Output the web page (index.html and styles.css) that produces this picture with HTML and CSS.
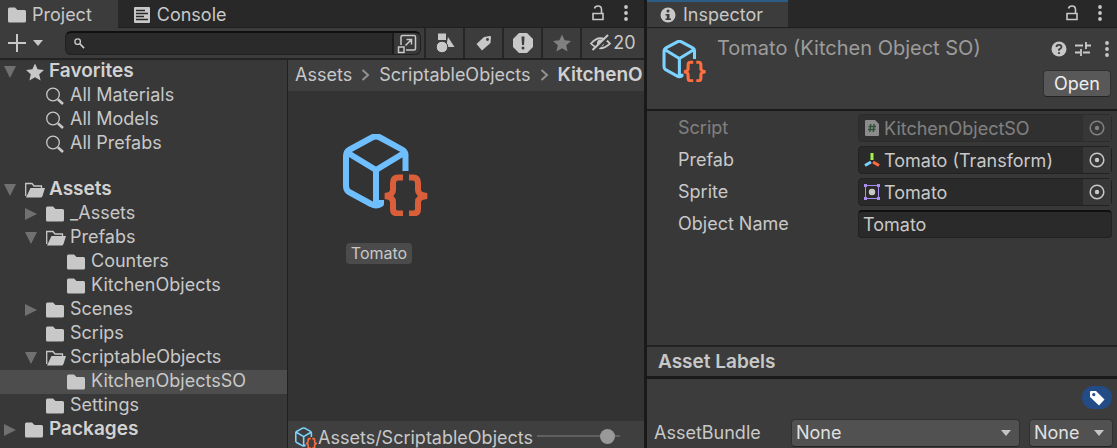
FILE: index.html
```html
<!DOCTYPE html>
<html lang="en">
<head>
<meta charset="utf-8">
<title>Project and Inspector</title>
<link rel="stylesheet" href="styles.css">
</head>
<body>
<svg class="sprites" aria-hidden="true">
  <symbol id="folder" viewBox="0 0 20 18"><path d="M0 3Q0 1.500 1.500 1.500H7L9.500 4H16.500Q18 4 18 5.500V15Q18 16.500 16.500 16.500H1.500Q0 16.500 0 15Z" fill="currentColor"/></symbol>
  <symbol id="folder-open" viewBox="0 0 20 18"><path d="M0.700 15V2.500H7L9 5H16.500V7.500" fill="none" stroke="currentColor" stroke-width="1.300"/><path d="M5.500 7H20L17.500 15Q17 16.500 15.500 16.500H1Z" fill="currentColor"/></symbol>
  <symbol id="down" viewBox="0 0 12 12"><path d="M0 0H12L6 12Z" fill="currentColor"/></symbol>
  <symbol id="right" viewBox="0 0 12 12"><path d="M0 0L12 6L0 12Z" fill="currentColor"/></symbol>
  <symbol id="caret" viewBox="0 0 10 6"><path d="M0 0H10L5 6Z" fill="currentColor"/></symbol>
  <symbol id="star" viewBox="0 0 18 18"><path d="M9 0.500L11.600 6.300L18 7L13.200 11.200L14.600 17.500L9 14.200L3.400 17.500L4.800 11.200L0 7L6.400 6.300Z" fill="currentColor"/></symbol>
  <symbol id="lens" viewBox="0 0 20 18"><circle cx="7" cy="7.500" r="6.300" fill="none" stroke="currentColor" stroke-width="1.300"/><path d="M12 12.500L17 17" stroke="currentColor" stroke-width="2.600"/></symbol>
  <symbol id="lock" viewBox="0 0 12 16"><path d="M1 8.500H11V14.500H1ZM2.500 3.500Q3 1 6 1Q9.500 1 9.500 4.500V8" fill="none" stroke="currentColor" stroke-width="1.600"/></symbol>
  <symbol id="dots" viewBox="0 0 4 16"><g fill="currentColor"><circle cx="2" cy="2" r="1.900"/><circle cx="2" cy="8" r="1.900"/><circle cx="2" cy="14" r="1.900"/></g></symbol>
  <symbol id="chevron" viewBox="0 0 8 12"><path d="M1 1L6.500 6L1 11" fill="none" stroke="currentColor" stroke-width="2"/></symbol>
  <symbol id="target" viewBox="0 0 16 16"><circle cx="8" cy="8" r="6.800" fill="none" stroke="currentColor" stroke-width="1.500"/><circle cx="8" cy="8" r="2.200" fill="currentColor"/></symbol>
  <symbol id="asset" viewBox="0 0 84 82"><path d="M62.500 37V21Q62.500 17.500 59 15.500L37 3.500Q33 1.500 29 3.500L6 16Q3 18 3 22V52Q3 56 6 58L28 70Q33 73 38 70V66M5 19L33 36L61 19M33 36V70" fill="none" stroke="var(--cube)" stroke-width="var(--line)" stroke-linejoin="round"/><path d="M60 43.500H55Q50 43.500 50 49V56Q50 61 42 62Q50 63 50 68V75Q50 79.500 55 79.500H60M66 43.500H70Q75 43.500 75 49V56Q75 61 84 62Q75 63 75 68V75Q75 79.500 70 79.500H66" fill="none" stroke="var(--brace)" stroke-width="6"/></symbol>
</svg>
<main class="editor">
  <section class="project">
    <header class="tabs">
      <button class="tab tab-active"><svg class="i20"><use href="#folder"/></svg>Project</button>
      <button class="tab"><svg class="i16" viewBox="0 0 16 18"><rect y="1" width="16" height="16" rx="1" fill="currentColor"/><path d="M2 4.500H11M2 7.500H14M2 10.500H10M2 13.500H14" stroke="#282828" stroke-width="1.300"/></svg>Console</button>
      <div class="tab-tools"><button aria-label="Lock"><svg class="lock"><use href="#lock"/></svg></button><button aria-label="Menu"><svg class="dots"><use href="#dots"/></svg></button></div>
    </header>
    <div class="toolbar">
      <button class="add" aria-label="Create"><svg class="plus" viewBox="0 0 18 18"><path d="M0 9H18M9 0V18" stroke="currentColor" stroke-width="2"/></svg><svg class="caret"><use href="#caret"/></svg></button>
      <div class="search">
        <svg class="search-lens" viewBox="0 0 12 12"><circle cx="4" cy="4" r="3" fill="none" stroke="currentColor" stroke-width="1.500"/><path d="M6.500 6.500L11 11" stroke="currentColor" stroke-width="1.800"/></svg>
        <input type="text" aria-label="Search">
        <button class="popout" aria-label="Open search"><svg class="i20" viewBox="0 0 20 20"><path d="M4 11V3Q4 1.500 5.500 1.500H17Q18.500 1.500 18.500 3V14.500Q18.500 16 17 16H9M1.500 13H7V18.500H1.500ZM8.500 11.500L14 6M9.500 5.500H14.500V10.500" fill="none" stroke="currentColor" stroke-width="1.500"/></svg></button>
      </div>
      <button class="tool" aria-label="Filter by type"><svg class="i20" viewBox="0 0 20 20"><path d="M3 0.500H11V7H3ZM13 4L19.500 14H11Z" fill="currentColor"/><circle cx="7" cy="14" r="5.800" fill="currentColor" stroke="#3c3c3c"/></svg></button>
      <button class="tool" aria-label="Filter by label"><svg class="i16" viewBox="0 0 16 16"><path d="M8 2L14 1Q15 1 15 2L14.500 8L6 15.500L0.500 9Z" fill="currentColor"/><circle cx="11.500" cy="4.500" r="1.400" fill="#3c3c3c"/></svg></button>
      <button class="tool" aria-label="Filter by message"><svg class="i20" viewBox="0 0 20 20"><path d="M6 0H14L20 6V14L14 20H6L0 14V6Z" fill="currentColor"/><path d="M8.500 3.500H11.500L11 12H9Z" fill="#3c3c3c"/><circle cx="10" cy="15" r="1.500" fill="#3c3c3c"/></svg></button>
      <button class="tool dim" aria-label="Save search"><svg class="i18"><use href="#star"/></svg></button>
      <button class="tool hidden-count"><svg class="eye" viewBox="0 0 22 18"><path d="M1 9.500Q10 -1 20 9.500Q10 19 1 9.500Z" fill="none" stroke="currentColor" stroke-width="1.800"/><circle cx="10.500" cy="9" r="3.500" fill="currentColor"/><path d="M4.500 17L19.500 2" stroke="#3c3c3c" stroke-width="3"/><path d="M2.500 16L18 1" stroke="currentColor" stroke-width="2"/></svg>20</button>
    </div>
    <div class="panes">
      <nav class="tree">
        <button class="row"><svg class="fold"><use href="#down"/></svg><svg class="i20"><use href="#star"/></svg><b>Favorites</b></button>
        <button class="row d1"><svg class="i20"><use href="#lens"/></svg>All Materials</button>
        <button class="row d1"><svg class="i20"><use href="#lens"/></svg>All Models</button>
        <button class="row d1"><svg class="i20"><use href="#lens"/></svg>All Prefabs</button>
        <button class="row group"><svg class="fold"><use href="#down"/></svg><svg class="i20"><use href="#folder-open"/></svg><b>Assets</b></button>
        <button class="row d1"><svg class="fold"><use href="#right"/></svg><svg class="i20"><use href="#folder"/></svg>_Assets</button>
        <button class="row d1"><svg class="fold"><use href="#down"/></svg><svg class="i20"><use href="#folder-open"/></svg>Prefabs</button>
        <button class="row d2"><svg class="i20"><use href="#folder"/></svg>Counters</button>
        <button class="row d2"><svg class="i20"><use href="#folder"/></svg>KitchenObjects</button>
        <button class="row d1"><svg class="fold"><use href="#right"/></svg><svg class="i20"><use href="#folder"/></svg>Scenes</button>
        <button class="row d1"><svg class="i20"><use href="#folder"/></svg>Scrips</button>
        <button class="row d1"><svg class="fold"><use href="#down"/></svg><svg class="i20"><use href="#folder-open"/></svg>ScriptableObjects</button>
        <button class="row d2 selected"><svg class="i20"><use href="#folder"/></svg>KitchenObjectsSO</button>
        <button class="row d1"><svg class="i20"><use href="#folder"/></svg>Settings</button>
        <button class="row"><svg class="fold"><use href="#right"/></svg><svg class="i20"><use href="#folder"/></svg><b>Packages</b></button>
      </nav>
      <div class="browser">
        <div class="crumbs"><button>Assets</button><svg class="chevron"><use href="#chevron"/></svg><button>ScriptableObjects</button><svg class="chevron"><use href="#chevron"/></svg><b>KitchenO</b></div>
        <div class="grid"><button class="item"><svg class="big"><use href="#asset"/></svg><span class="item-name">Tomato</span></button></div>
        <footer class="status"><svg class="small"><use href="#asset"/></svg><span class="path">Assets/ScriptableObjects</span><input class="zoom" type="range" min="0" max="100" value="92" aria-label="Icon size"></footer>
      </div>
    </div>
  </section>
  <section class="inspector">
    <header class="tabs">
      <button class="tab tab-active tab-focus"><svg class="i16" viewBox="0 0 16 16"><circle cx="8" cy="8" r="7.500" fill="currentColor"/><circle cx="8" cy="4" r="1.500" fill="#3c3c3c"/><path d="M5.500 7H9.500V11.500H11V13H5.500V11.500H6.800V8.500H5.500Z" fill="#3c3c3c"/></svg>Inspector</button>
      <div class="tab-tools"><button aria-label="Lock"><svg class="lock"><use href="#lock"/></svg></button><button aria-label="Menu"><svg class="dots"><use href="#dots"/></svg></button></div>
    </header>
    <div class="object-head">
      <svg class="medium"><use href="#asset"/></svg>
      <h1>Tomato (Kitchen Object SO)</h1>
      <div class="head-side">
        <div class="head-tools">
          <button aria-label="Help"><svg class="i16" viewBox="0 0 16 16"><circle cx="8" cy="8" r="7.500" fill="currentColor"/><path d="M5.500 6Q5.500 3.800 8 3.800Q10.500 3.800 10.500 6Q10.500 7.200 8 8.500V9.800" fill="none" stroke="#3c3c3c" stroke-width="1.800"/><circle cx="8" cy="12" r="1.100" fill="#3c3c3c"/></svg></button>
          <button aria-label="Presets"><svg class="i16" viewBox="0 0 16 16"><path d="M0 4.500H8M10 4.500H16M11 1V8M0 11.500H5M8 11.500H15M6 8V15" stroke="currentColor" stroke-width="1.800"/></svg></button>
          <button aria-label="More"><svg class="dots"><use href="#dots"/></svg></button>
        </div>
        <button class="open">Open</button>
      </div>
    </div>
    <div class="fields">
      <div class="field disabled"><span id="l1">Script</span><div class="ref"><button class="ref-value" aria-labelledby="l1" disabled><svg class="i16" viewBox="0 0 16 18"><path d="M1 2Q1 1 2 1H11L15 5V16Q15 17 14 17H2Q1 17 1 16Z" fill="#e0e0e0"/><path d="M6.800 5L5.800 13M10.200 5L9.200 13M4.500 7.500H12M4 10.500H11.500" stroke="#2a6a35" stroke-width="1.400"/></svg>KitchenObjectSO</button><button class="pick" aria-label="Pick script" disabled><svg class="i16"><use href="#target"/></svg></button></div></div>
      <div class="field"><span id="l2">Prefab</span><div class="ref"><button class="ref-value" aria-labelledby="l2"><svg class="i16" viewBox="0 0 16 16"><path d="M8 8V1" stroke="#a6f04c" stroke-width="3"/><path d="M7 10L1 13.500" stroke="#7ad0fb" stroke-width="3"/><path d="M9 10L15 13.500" stroke="#ff6d3f" stroke-width="3"/></svg>Tomato (Transform)</button><button class="pick" aria-label="Pick prefab"><svg class="i16"><use href="#target"/></svg></button></div></div>
      <div class="field"><span id="l3">Sprite</span><div class="ref"><button class="ref-value" aria-labelledby="l3"><svg class="i16" viewBox="0 0 16 16"><path d="M1.500 1.500H14.500V14.500H1.500Z" fill="none" stroke="#a98ef0"/><path d="M0 0H3V3H0ZM13 0H16V3H13ZM0 13H3V16H0ZM13 13H16V16H13Z" fill="#a98ef0"/><circle cx="8" cy="8" r="3.200" fill="#c8c8c8"/></svg>Tomato</button><button class="pick" aria-label="Pick sprite"><svg class="i16"><use href="#target"/></svg></button></div></div>
      <div class="field"><label for="name">Object Name</label><input class="text" id="name" type="text" value="Tomato"></div>
    </div>
    <h2 class="labels-bar">Asset Labels</h2>
    <div class="labels">
      <button class="pill" aria-label="Add label"><svg class="i16" viewBox="0 0 16 16"><path d="M1 2Q1 1 2 1H7L15.500 9.500L10 15.500L1 7Z" fill="#fff"/><circle cx="4.800" cy="4.600" r="1.600" fill="#234b85"/></svg></button>
      <div class="bundle">
        <label for="bundle">AssetBundle</label>
        <div class="drop drop-wide"><select id="bundle"><option>None</option></select><svg class="caret"><use href="#caret"/></svg></div>
        <div class="drop drop-narrow"><select aria-label="Variant"><option>None</option></select><svg class="caret"><use href="#caret"/></svg></div>
      </div>
    </div>
  </section>
</main>
</body>
</html>
```

FILE: styles.css
```css
* { box-sizing: border-box; }
body { margin: 0; background: #191919; color: #c8c8c8; font: 18px/24px Inter, "Liberation Sans", sans-serif; }
button, input, select { font: inherit; color: inherit; margin: 0; padding: 0; border: 0; background: none; border-radius: 0; outline: 0; min-width: 0; appearance: none; }
button { display: flex; align-items: center; white-space: nowrap; }
b { font-size: 19px; font-weight: 600; color: #d2d2d2; }
svg { display: block; flex: none; }
.sprites { width: 0; height: 0; position: absolute; }
.i20 { width: 20px; height: 18px; }
.i18 { width: 18px; height: 18px; }
.i16 { width: 16px; height: 18px; }
.lock { width: 12px; height: 16px; }
.dots { width: 4px; height: 16px; }
.caret { width: 10px; height: 6px; }
.editor { display: grid; grid-template-columns: 645fr 470fr; gap: 2px; height: 100vh; overflow: hidden; }
.project, .inspector { display: flex; flex-direction: column; min-width: 0; min-height: 0; background: #383838; }
.project { border-right: 1px solid #191919; }

.tabs { display: flex; height: 28px; background: #282828; border-bottom: 1px solid #1f1f1f; }
.tab { gap: 7px; padding: 2px 16px 0; }
.tab-active { background: #3c3c3c; margin-bottom: -1px; padding: 2px 26px 0 8px; gap: 4px; }
.tab-focus { border-top: 2px solid #2c5d87; padding: 0 25px 0 13px; gap: 7px; margin-bottom: 0; }
.tab-tools { display: flex; align-items: center; gap: 20px; margin-left: auto; padding: 0 16px 2px 0; }
.inspector .tab-tools { padding-right: 15px; }

.toolbar { display: flex; height: 32px; background: #3c3c3c; border-bottom: 2px solid #232323; }
.add { gap: 7px; padding: 0 22px 0 8px; }
.plus { width: 18px; height: 18px; }
.search { display: flex; align-items: center; flex: 1; min-width: 0; height: 24px; margin: 3px 3px 3px 0; padding-left: 8px; background: #2a2a2a; border: 1px solid #202020; border-top: 2px solid #101010; border-radius: 6px; }
.search-lens { width: 11px; height: 11px; }
.search input { flex: 1; padding: 0 4px; }
.popout { height: 21px; padding: 0 3px; background: #383838; border-left: 2px solid #1c1c1c; border-radius: 0 5px 5px 0; }
.popout .i20, .tool .i20 { height: 20px; }
.tool { justify-content: center; width: 39px; border-left: 2px solid #262626; }
.dim { color: #808080; }
.hidden-count { width: 64px; gap: 1px; }
.eye { width: 22px; height: 18px; }

.panes { display: flex; flex: 1; min-height: 0; }
.tree { flex: none; width: 288px; border-right: 1px solid #202020; }
.row { width: 100%; height: 24px; padding: 0 0 2px 4px; gap: 4px; }
.row .fold { width: 12px; height: 12px; color: #707070; margin: 2px 5px 0 0; }
.row .i20 { margin-top: 2px; }
.row > .i20:first-child { margin-left: 21px; }
.d1 { padding-left: 25px; }
.d2 { padding-left: 46px; }
.group { margin-top: 22px; }
.selected { background: #4d4d4d; }

.browser { display: flex; flex-direction: column; flex: 1; min-width: 0; background: #333; }
.crumbs { display: flex; align-items: center; height: 31px; flex: none; padding: 0 0 2px 7px; gap: 9px; background: #3f3f3f; overflow: hidden; white-space: nowrap; }
.chevron { width: 9px; height: 12px; color: #929292; }
.grid { flex: 1; padding: 43px 47px; }
.item { flex-direction: column; gap: 27px; }
.item-name { padding: 0 5px; border-radius: 4px; background: #4b4b4b; font-size: 16px; line-height: 21px; margin-right: 12px; }
.big, .medium, .small { --cube: #6fbfff; --brace: #d95f3b; --line: 6; }
.big { width: 100px; height: 82px; }
.medium { width: 44px; height: 42px; --cube: #7dd3ff; --brace: #ff6e40; }
.small { width: 22px; height: 22px; --cube: #7dd3ff; --brace: #ff6e40; }
.status { display: flex; align-items: center; height: 27px; padding: 6px 24px 0 7px; background: #3f3f3f; }
.path { flex: 1; min-width: 0; overflow: hidden; white-space: nowrap; padding-left: 1px; }
.zoom { width: 83px; height: 16px; margin: 0 0 4px 4px; }
.zoom::-webkit-slider-runnable-track { height: 2px; background: #606060; }
.zoom::-webkit-slider-thumb { appearance: none; width: 15px; height: 15px; margin-top: -6px; border-radius: 50%; background: #999; }

.object-head { display: flex; height: 82px; margin-top: 1px; padding: 11px 6px 0 15px; background: #3c3c3c; border-bottom: 2px solid #1a1a1a; }
.object-head h1 { flex: 1; min-width: 0; margin: -4px 0 0 11px; font-size: 20px; line-height: 24px; font-weight: 400; color: #9c9c9c; white-space: nowrap; }
.head-side { display: flex; flex-direction: column; align-items: flex-end; gap: 12px; }
.head-tools { display: flex; align-items: center; gap: 8px; padding-right: 2px; }
.head-tools button:last-child { margin-left: 6px; }
.open { height: 27px; padding: 0 10px; border: 1px solid #303030; border-bottom-color: #242424; border-radius: 4px; background: #585858; color: #eee; }

.fields { display: flex; flex-direction: column; gap: 4px; flex: 1; padding: 3px 5px 0 31px; }
.field { display: grid; grid-template-columns: 176px 1fr; gap: 4px; align-items: center; }
.ref, .text { display: flex; width: 100%; height: 28px; background: #2a2a2a; border: 1px solid #212121; border-radius: 4px; }
.text { padding-left: 4px; border-top: 2px solid #101010; }
.ref-value { flex: 1; padding: 2px 0 0 5px; gap: 4px; }
.ref-value .i16 { margin-bottom: 2px; }
.pick { justify-content: center; width: 28px; background: #373737; }
.disabled { opacity: 0.5; }

.labels-bar { margin: 0; padding: 3px 11px; height: 34px; border-top: 2px solid #222; border-bottom: 3px solid #1a1a1a; background: #3c3c3c; font-size: 19px; line-height: 24px; font-weight: 600; }
.labels { display: flex; flex-direction: column; align-items: flex-end; gap: 10px; padding: 7px 4px 1px 7px; background: #3c3c3c; }
.pill { justify-content: center; width: 30px; height: 23px; margin-right: 1px; border-radius: 12px; background: #234b85; }
.bundle { display: flex; width: 100%; align-items: center; gap: 9px; }
.bundle label { width: 128px; }
.drop { display: grid; align-items: center; height: 28px; border: 1px solid #303030; border-bottom-color: #242424; border-radius: 4px; background: #515151; color: #e0e0e0; }
.drop select, .drop svg { grid-area: 1 / 1; }
.drop select { width: 100%; height: 26px; padding-left: 4px; }
.drop svg { justify-self: end; margin-right: 8px; color: #c4c4c4; pointer-events: none; }
.drop-wide { flex: 1; }
.drop-narrow { width: 84px; }
```
